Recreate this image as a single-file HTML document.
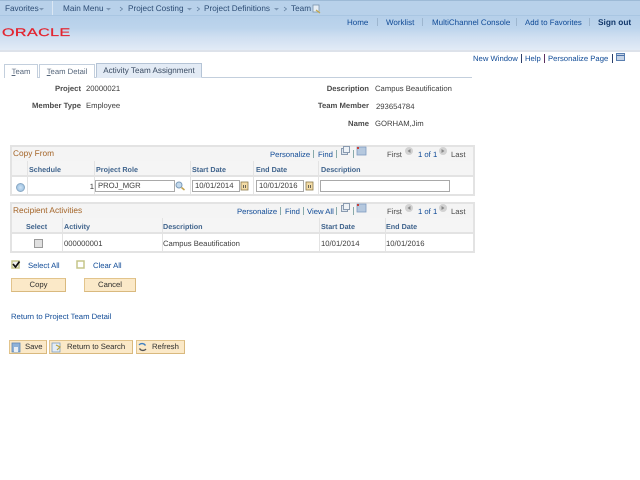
<!DOCTYPE html>
<html><head><meta charset="utf-8"><style>
html,body{margin:0;padding:0;background:#fff;width:640px;height:480px;overflow:hidden}
body{position:relative;font-family:"Liberation Sans",Arial,sans-serif;font-size:7.7px;color:#3c3c3c;text-rendering:geometricPrecision}
div,span.t,a.t{position:absolute;white-space:nowrap}
.t{line-height:11px;height:11px}
.l{color:#0f4a96}
.n{color:#2c4c74;font-size:8.2px}
.b{font-weight:bold;color:#4a4a4a}
.h{font-weight:bold;color:#3f638c;font-size:7.2px}
.r{text-align:right}
.inp{background:#fff;border:1px solid #a9a9a9;box-sizing:border-box;height:12px;line-height:10px;padding-left:2px;color:#3c3c3c}
.btn{background:#fbe9c8;border:1px solid #e2c48c;border-right-color:#d9b97e;border-bottom-color:#d9b97e;box-sizing:border-box;text-align:center;color:#2c2c2c}
.tab{background:#fff;border:1px solid #c3cfdd;border-bottom:0;box-sizing:border-box;color:#55657a;text-align:center;height:14px;line-height:13px}
.rule{background:#e3e3e3}
svg{position:absolute;overflow:visible}
</style></head><body>

<div style="left:0;top:0;width:640px;height:52px;background:linear-gradient(#b8d1ea 0,#b8d1ea 16px,#b6d0ea 17px,#bcd4ec 28px,#cfdff1 37px,#e2ebf6 50px)"></div>
<div style="left:0;top:0;width:640px;height:1px;background:#9dbad6"></div>
<div style="left:0;top:15px;width:640px;height:1px;background:#a9c6e2"></div>
<div style="left:52px;top:1px;width:1px;height:14px;background:#dbe7f3"></div>
<div style="left:0;top:50px;width:640px;height:2px;background:#dde2ea"></div>

<span class="t n" style="left:5px;top:3px">Favorites</span>
<span class="t n" style="left:63px;top:3px">Main Menu</span>
<span class="t n" style="left:128px;top:3px">Project Costing</span>
<span class="t n" style="left:204px;top:3px">Project Definitions</span>
<span class="t n" style="left:291px;top:3px">Team</span>
<svg style="left:0;top:0" width="330" height="16"><g fill="#7d97b4">
<path d="M39 8h5l-2.500 2.500z"/><path d="M106 8h5l-2.500 2.500z"/><path d="M187 8h5l-2.500 2.500z"/><path d="M274 8h5l-2.500 2.500z"/></g>
<g fill="none" stroke="#5f7c9c" stroke-width=".8"><path d="M120 7l2.500 2-2.500 2M197 7l2.500 2-2.500 2M284 7l2.500 2-2.500 2"/></g>
<rect x="313" y="5" width="6" height="7" fill="#e6eef6" stroke="#7b93ac" stroke-width=".8"/><path d="M316 10l4 3" stroke="#c4a84a" stroke-width="1.200"/></svg>

<span class="t" style="left:2px;top:28px;color:#e3242f;font-size:11px;letter-spacing:.3px;-webkit-text-stroke:.25px #e3242f;transform:scaleX(1.460);transform-origin:0 50%;line-height:11px">ORACLE</span>

<span class="t l" style="left:347px;top:17px;font-size:8px">Home</span>
<span class="t l" style="left:386px;top:17px;font-size:8px">Worklist</span>
<span class="t l" style="left:432px;top:17px;font-size:8px">MultiChannel Console</span>
<span class="t l" style="left:525px;top:17px;font-size:7.800px">Add to Favorites</span>
<span class="t" style="left:598px;top:17px;font-size:8.300px;font-weight:bold;color:#12386b">Sign out</span>
<div style="left:377px;top:18px;width:1px;height:8px;background:#9db6cf"></div>
<div style="left:422px;top:18px;width:1px;height:8px;background:#9db6cf"></div>
<div style="left:516px;top:18px;width:1px;height:8px;background:#9db6cf"></div>
<div style="left:589px;top:18px;width:1px;height:8px;background:#9db6cf"></div>

<span class="t l" style="left:473px;top:53px">New Window</span>
<span class="t l" style="left:525px;top:53px">Help</span>
<span class="t l" style="left:548px;top:53px">Personalize Page</span>
<div style="left:521px;top:54px;width:1px;height:9px;background:#2a3f6b"></div>
<div style="left:544px;top:54px;width:1px;height:9px;background:#5a2f5f"></div>
<div style="left:612px;top:54px;width:1px;height:9px;background:#2a3f6b"></div>
<svg style="left:616px;top:53px" width="10" height="9"><rect x=".5" y=".5" width="8" height="7" fill="#c5d3e6" stroke="#5a7fb0"/><path d="M.5 2.500h8" stroke="#4a70a8"/></svg>

<div style="left:4px;top:77px;width:468px;height:1px;background:#c3cfdd"></div>
<div class="tab" style="left:4px;top:64px;width:34px"><u>T</u>eam</div>
<div class="tab" style="left:39px;top:64px;width:56px"><u>T</u>eam Detail</div>
<div class="tab" style="left:96px;top:63px;width:106px;height:15px;line-height:14px;font-size:8.100px;background:#e3ebf5;color:#3a4b62;border-color:#b5c4d6;border-bottom:1px solid #e3ebf5">Activity Team Assignment</div>

<span class="t b r" style="left:20px;top:83px;width:61px">Project</span>
<span class="t" style="left:86px;top:83px">20000021</span>
<span class="t b r" style="left:20px;top:100px;width:61px">Member Type</span>
<span class="t" style="left:86px;top:100px">Employee</span>
<span class="t b r" style="left:300px;top:83px;width:69px">Description</span>
<span class="t" style="left:375px;top:83px">Campus Beautification</span>
<span class="t b r" style="left:300px;top:100px;width:69px">Team Member</span>
<span class="t" style="left:376px;top:101px">293654784</span>
<span class="t b r" style="left:300px;top:118px;width:69px">Name</span>
<span class="t" style="left:375px;top:118px">GORHAM,Jim</span>

<!-- Copy From grid -->
<div style="left:10px;top:145px;width:465px;height:51px;background:#e3e3e3"></div>
<div style="left:12px;top:147px;width:461px;height:14px;background:#f4f4f4"></div>
<div style="left:12px;top:161px;width:461px;height:14px;background:#f5f5f5"></div>
<div style="left:12px;top:177px;width:461px;height:17px;background:#fff"></div>
<div class="rule" style="left:27px;top:161px;width:1px;height:33px"></div>
<div class="rule" style="left:94px;top:161px;width:1px;height:33px"></div>
<div class="rule" style="left:190px;top:161px;width:1px;height:33px"></div>
<div class="rule" style="left:253px;top:161px;width:1px;height:33px"></div>
<div class="rule" style="left:318px;top:161px;width:1px;height:33px"></div>
<span class="t" style="left:13px;top:148px;font-size:8.300px;color:#a5662a">Copy From</span>
<span class="t l" style="left:270px;top:149px">Personalize</span>
<span class="t l" style="left:318px;top:149px">Find</span>
<span class="t" style="left:387px;top:149px;color:#4c4c4c">First</span>
<span class="t l" style="left:418px;top:149px">1 of 1</span>
<span class="t" style="left:451px;top:149px;color:#4c4c4c">Last</span>
<div style="left:313px;top:150px;width:1px;height:8px;background:#8aa"></div>
<div style="left:336px;top:150px;width:1px;height:8px;background:#8aa"></div>
<div style="left:353px;top:150px;width:1px;height:8px;background:#8aa"></div>
<svg style="left:340px;top:146px" width="130" height="14">
<rect x="1.500" y="2.500" width="6" height="6" fill="#dfe6ee" stroke="#8a9bb0"/><rect x="3.500" y=".5" width="6" height="6" fill="#eef2f6" stroke="#8a9bb0"/>
<rect x="17" y="1" width="9" height="8" fill="#b5c8de" stroke="#7f9cc0" stroke-width=".8"/><rect x="17" y="1" width="2" height="2" fill="#c8403a"/>
<circle cx="69" cy="5" r="4" fill="#d2d2d2"/><path d="M70.500 3v4l-3-2z" fill="#888"/>
<circle cx="103" cy="5" r="4" fill="#d2d2d2"/><path d="M101.500 3v4l3-2z" fill="#888"/></svg>

<span class="t h" style="left:29px;top:164px">Schedule</span>
<span class="t h" style="left:96px;top:164px">Project Role</span>
<span class="t h" style="left:192px;top:164px">Start Date</span>
<span class="t h" style="left:256px;top:164px">End Date</span>
<span class="t h" style="left:321px;top:164px">Description</span>

<div style="left:16px;top:183px;width:7px;height:7px;border-radius:50%;background:radial-gradient(#cfe3f5,#8fb9dd);border:.5px solid #8aa9c4"></div>
<span class="t r" style="left:60px;top:181px;width:34px">1</span>
<div class="inp" style="left:95px;top:180px;width:80px">PROJ_MGR</div>
<svg style="left:175px;top:181px" width="11" height="10"><circle cx="4" cy="4" r="3" fill="#c4daed" stroke="#7b9ab8"/><path d="M6.500 6.500l3 2.500" stroke="#c2a24c" stroke-width="1.500"/></svg>
<div class="inp" style="left:192px;top:180px;width:48px">10/01/2014</div>
<div class="inp" style="left:256px;top:180px;width:48px">10/01/2016</div>
<svg style="left:240px;top:181px" width="70" height="10"><g><rect x="1" y="1" width="7" height="8" fill="#f3dca6" stroke="#8c7a4c" stroke-width=".8"/><path d="M3.500 4v3M5.500 4v3" stroke="#444" stroke-width=".8"/></g><g transform="translate(65 0)"><rect x="1" y="1" width="7" height="8" fill="#f3dca6" stroke="#8c7a4c" stroke-width=".8"/><path d="M3.500 4v3M5.500 4v3" stroke="#444" stroke-width=".8"/></g></svg>
<div class="inp" style="left:320px;top:180px;width:130px"></div>

<!-- Recipient grid -->
<div style="left:10px;top:202px;width:465px;height:51px;background:#e3e3e3"></div>
<div style="left:12px;top:204px;width:461px;height:14px;background:#f4f4f4"></div>
<div style="left:12px;top:218px;width:461px;height:14px;background:#f5f5f5"></div>
<div style="left:12px;top:234px;width:461px;height:17px;background:#fff"></div>
<div class="rule" style="left:62px;top:218px;width:1px;height:33px"></div>
<div class="rule" style="left:162px;top:218px;width:1px;height:33px"></div>
<div class="rule" style="left:319px;top:218px;width:1px;height:33px"></div>
<div class="rule" style="left:385px;top:218px;width:1px;height:33px"></div>
<span class="t" style="left:13px;top:205px;font-size:8.300px;color:#a5662a">Recipient Activities</span>
<span class="t l" style="left:237px;top:206px">Personalize</span>
<span class="t l" style="left:285px;top:206px">Find</span>
<span class="t l" style="left:307px;top:206px">View All</span>
<span class="t" style="left:387px;top:206px;color:#4c4c4c">First</span>
<span class="t l" style="left:418px;top:206px">1 of 1</span>
<span class="t" style="left:451px;top:206px;color:#4c4c4c">Last</span>
<div style="left:280px;top:207px;width:1px;height:8px;background:#8aa"></div>
<div style="left:303px;top:207px;width:1px;height:8px;background:#8aa"></div>
<div style="left:336px;top:207px;width:1px;height:8px;background:#8aa"></div>
<div style="left:353px;top:207px;width:1px;height:8px;background:#8aa"></div>
<svg style="left:340px;top:203px" width="130" height="14">
<rect x="1.500" y="2.500" width="6" height="6" fill="#dfe6ee" stroke="#8a9bb0"/><rect x="3.500" y=".5" width="6" height="6" fill="#eef2f6" stroke="#8a9bb0"/>
<rect x="17" y="1" width="9" height="8" fill="#b5c8de" stroke="#7f9cc0" stroke-width=".8"/><rect x="17" y="1" width="2" height="2" fill="#c8403a"/>
<circle cx="69" cy="5" r="4" fill="#d2d2d2"/><path d="M70.500 3v4l-3-2z" fill="#888"/>
<circle cx="103" cy="5" r="4" fill="#d2d2d2"/><path d="M101.500 3v4l3-2z" fill="#888"/></svg>

<span class="t h" style="left:26px;top:221px">Select</span>
<span class="t h" style="left:64px;top:221px">Activity</span>
<span class="t h" style="left:163px;top:221px">Description</span>
<span class="t h" style="left:321px;top:221px">Start Date</span>
<span class="t h" style="left:386px;top:221px">End Date</span>
<div style="left:34px;top:239px;width:7px;height:7px;background:#e0e0e0;border:1px solid #9a9a9a"></div>
<span class="t" style="left:64px;top:238px">000000001</span>
<span class="t" style="left:163px;top:238px">Campus Beautification</span>
<span class="t" style="left:321px;top:238px">10/01/2014</span>
<span class="t" style="left:386px;top:238px">10/01/2016</span>

<svg style="left:11px;top:260px" width="80" height="11">
<rect x="1" y="1" width="7" height="7" fill="#eee" stroke="#c5c58a" stroke-width="1.500"/><path d="M2 4l2.500 3L8.500 1.500" fill="none" stroke="#111" stroke-width="1.700"/>
<rect x="66" y="1" width="7" height="7" fill="#fff" stroke="#c5c58a" stroke-width="1.500"/></svg>
<span class="t l" style="left:28px;top:260px">Select All</span>
<span class="t l" style="left:93px;top:260px">Clear All</span>

<div class="btn" style="left:11px;top:278px;width:55px;height:14px;line-height:12px">Copy</div>
<div class="btn" style="left:84px;top:278px;width:52px;height:14px;line-height:12px">Cancel</div>

<span class="t l" style="left:11px;top:311px">Return to Project Team Detail</span>

<div class="btn" style="left:9px;top:340px;width:38px;height:14px;line-height:12px;text-align:left;padding-left:15px">Save</div>
<div class="btn" style="left:49px;top:340px;width:84px;height:14px;line-height:12px;text-align:left;padding-left:17px">Return to Search</div>
<div class="btn" style="left:136px;top:340px;width:49px;height:14px;line-height:12px;text-align:left;padding-left:15px">Refresh</div>
<svg style="left:0;top:335px" width="190" height="25">
<rect x="12" y="8" width="8" height="9" fill="#8fb2d8" stroke="#5f86b4" stroke-width=".8"/><rect x="14" y="12" width="4" height="5" fill="#e8eef5"/>
<rect x="52" y="8" width="8" height="9" fill="#e4edf6" stroke="#7d9cbc" stroke-width=".8"/><path d="M56 10l4 2-3 3" fill="none" stroke="#b9a23e" stroke-width="1.200"/>
<path d="M139 10a4 4 0 0 1 6.500 .5" fill="none" stroke="#3f7fc0" stroke-width="1.300"/><path d="M146 14a4 4 0 0 1-6.500-.5" fill="none" stroke="#555" stroke-width="1.300"/></svg>

</body></html>
